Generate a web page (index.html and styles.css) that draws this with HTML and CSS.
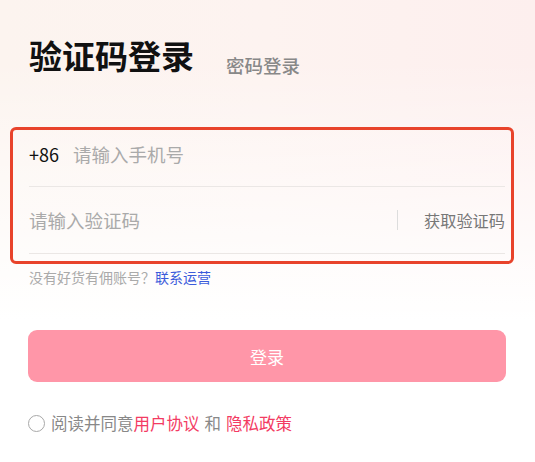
FILE: index.html
```html
<!DOCTYPE html>
<html lang="zh-CN">
<head>
<meta charset="utf-8">
<link rel="stylesheet" href="styles.css">
</head>
<body>
<div class="page">
  <div class="header">
    <h1 class="title">验证码登录</h1>
    <span class="tab">密码登录</span>
  </div>
  <div class="form">
    <div class="row row-phone">
      <span class="prefix">+86</span>
      <span class="placeholder">请输入手机号</span>
    </div>
    <div class="row row-code">
      <span class="placeholder grow">请输入验证码</span>
      <span class="vline"></span>
      <span class="getcode">获取验证码</span>
    </div>
  </div>
  <div class="hint">没有好货有佣账号？<a class="link">联系运营</a></div>
  <button class="btn">登录</button>
  <div class="agree">
    <span class="radio"></span>
    <span>阅读并同意</span><span class="red">用户协议</span><span class="and">和</span><span class="red">隐私政策</span>
  </div>
</div>
</body>
</html>
```
FILE: styles.css
```css
html, body {
  margin: 0;
  padding: 0;
}
body {
  width: 535px;
  height: 462px;
  overflow: hidden;
  font-family: "Noto Sans CJK SC", "Noto Sans", sans-serif;
  background:
    linear-gradient(180deg, rgba(255,255,255,0) 0px, rgba(255,255,255,0) 60px, #ffffff 320px),
    linear-gradient(90deg, #fcf4ef 0%, #fdf3f0 50%, #fdefee 100%);
}
.page {
  display: flex;
  flex-direction: column;
}
.header {
  display: flex;
  align-items: baseline;
  padding: 33px 0 0 29px;
  height: 91px;
  box-sizing: border-box;
}
.title {
  margin: 0;
  font-size: 33px;
  font-weight: 700;
  color: #111;
  line-height: 44px;
}
.tab {
  margin-left: 32px;
  font-size: 18.5px;
  font-weight: 500;
  color: #888;
  position: relative;
  top: 4px;
}
.form {
  margin: 36px 21px 0 10px;
  border: 3px solid #e8432b;
  border-radius: 6px;
  padding: 0 6px 7px 16px;
}
.row {
  display: flex;
  align-items: center;
  border-bottom: 1px solid #ebe7e5;
}
.row-phone {
  height: 57px;
  padding-bottom: 9px;
  box-sizing: border-box;
}
.row-code {
  height: 67px;
  box-sizing: border-box;
}
.prefix {
  font-size: 18px;
  color: #111;
  margin-right: 14px;
}
.placeholder {
  font-size: 18.5px;
  color: #aaa;
}
.grow {
  flex: 1;
}
.vline {
  width: 1px;
  height: 20px;
  background: #ddd;
  margin-right: 26px;
}
.getcode {
  font-size: 16.2px;
  color: #777;
}
.hint {
  margin: 3px 0 0 29px;
  font-size: 14px;
  color: #aaa;
  line-height: 20px;
}
.link {
  color: #3b5bdb;
}
.btn {
  margin: 43px 29px 0 28px;
  height: 52px;
  border: none;
  border-radius: 9px;
  background: #ff96a8;
  color: #fff;
  font-family: inherit;
  font-size: 17px;
  padding: 0;
}
.agree {
  display: flex;
  align-items: center;
  margin: 30px 0 0 28px;
  font-size: 16.5px;
  color: #888;
  line-height: 22px;
}
.radio {
  width: 15px;
  height: 15px;
  border: 1.5px solid #a8a8a8;
  border-radius: 50%;
  margin-right: 6px;
}
.red {
  color: #f33b63;
}
.and {
  margin: 0 5px;
}
```
